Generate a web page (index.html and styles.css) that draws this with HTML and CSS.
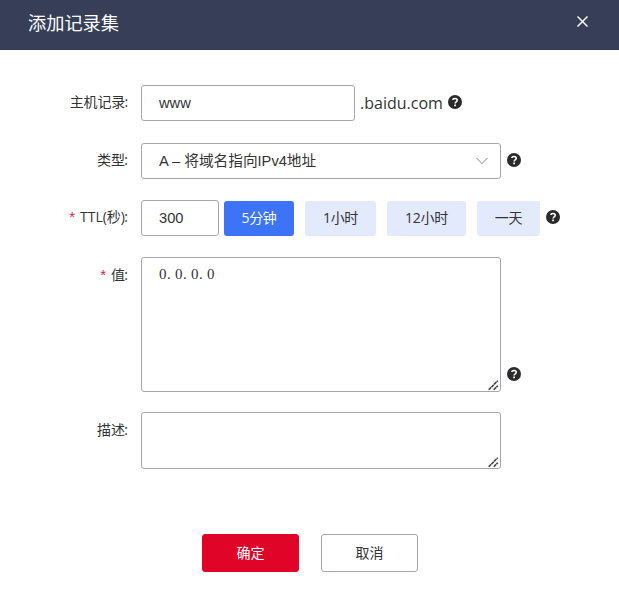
FILE: index.html
```html
<!DOCTYPE html>
<html lang="zh-CN">
<head>
<meta charset="utf-8">
<title>添加记录集</title>
<link rel="stylesheet" href="styles.css">
</head>
<body>
<svg class="defs" width="0" height="0">
  <symbol id="help" viewBox="0 0 14 14">
    <circle cx="7" cy="7" r="7" fill="#2b2b2b"/>
    <path d="M4.8 5C5 3 9.200 3 9.200 5.200C9.200 6.800 7.100 6.800 7.100 8.600" fill="none" stroke="#fff" stroke-width="1.6"/>
    <rect x="6.200" y="9.500" width="1.8" height="1.7" fill="#fff"/>
  </symbol>
  <symbol id="grip" viewBox="0 0 11 11">
    <path d="M.7 9.8L9.8.7M5.7 9.8L9.8 5.7" fill="none" stroke="#444" stroke-width="1.6" stroke-dasharray="3.4 .4"/>
  </symbol>
</svg>
<header class="header">
  <h1 class="title">添加记录集</h1>
  <svg class="close" viewBox="0 0 11 11"><path d="M.5.5l10 10M10.5.5l-10 10" stroke="#fff" stroke-width="1.5"/></svg>
</header>
<main class="form">
  <div class="row host">
    <div class="label">主机记录<span class="colon">:</span></div>
    <div class="box host-box">www</div>
    <span class="domain">.baidu.com</span>
    <svg class="help"><use href="#help"/></svg>
  </div>
  <div class="row type">
    <div class="label">类型<span class="colon">:</span></div>
    <div class="box select"><span>A – 将域名指向IPv4地址</span>
      <svg class="chevron" viewBox="0 0 12 8"><path d="M.5.8L6 6.8L11.500.8" fill="none" stroke="#aaa" stroke-width="1.1"/></svg>
    </div>
    <svg class="help"><use href="#help"/></svg>
  </div>
  <div class="row ttl">
    <div class="label"><span class="star">*</span>TTL(秒)<span class="colon">:</span></div>
    <div class="box ttl-box">300</div>
    <div class="chips">
      <div class="chip active">5分钟</div>
      <div class="chip">1小时</div>
      <div class="chip wide">12小时</div>
      <div class="chip day">一天</div>
    </div>
    <svg class="help"><use href="#help"/></svg>
  </div>
  <div class="row value">
    <div class="label"><span class="star">*</span>值<span class="colon">:</span></div>
    <div class="box area value-area"><span class="ip">0<i>.</i>0<i>.</i>0<i>.</i>0</span><svg class="grip"><use href="#grip"/></svg></div>
    <svg class="help"><use href="#help"/></svg>
  </div>
  <div class="row desc">
    <div class="label">描述<span class="colon">:</span></div>
    <div class="box area desc-area"><svg class="grip"><use href="#grip"/></svg></div>
  </div>
</main>
<footer class="actions">
  <div class="btn primary">确定</div>
  <div class="btn">取消</div>
</footer>
</body>
</html>
```
FILE: styles.css
```css
* { box-sizing: border-box; }
body {
  margin: 0;
  background: #fff;
  color: #333;
  font: 14px/20px "Open Sans", "Noto Sans CJK SC", sans-serif;
  white-space: nowrap;
}
svg { display: block; flex: none; }
.defs { position: absolute; }
.header {
  display: flex;
  align-items: center;
  justify-content: space-between;
  height: 50px;
  padding: 0 31px 6px 28px;
  background: #373f58;
}
.title { margin: 1px 0 0; color: #fff; font-size: 18.2px; font-weight: 400; line-height: 26px; }
.close { width: 11px; height: 11px; margin-top: -1px; }
.form { padding-top: 35px; }
.row { display: flex; align-items: center; }
.label { width: 128px; margin-right: 13px; flex: none; text-align: right; }
.colon { display: inline-block; width: 3px; text-indent: -1px; }
.host .label { letter-spacing: -.2px; }
.star { margin-right: 5px; color: #e0223c; font-family: "Liberation Sans", sans-serif; font-size: 15px; }
.box {
  display: flex;
  align-items: center;
  flex: none;
  height: 36px;
  padding-left: 17px;
  border: 1px solid #a3a6b1;
  border-radius: 3px;
  font: 14.67px/20px "Liberation Sans", "Noto Sans CJK SC", sans-serif;
}
.help { width: 14px; height: 14px; margin-left: 6px; }
.host .label, .type .label, .ttl .label { padding-bottom: 2px; }
.host-box { width: 214px; }
.domain { width: 83px; margin-left: 5px; font-size: 16px; line-height: 24px; }
.host .help { margin-left: 5px; margin-bottom: 2px; }
.type { margin-top: 22px; }
.type .help, .ttl .help { margin-bottom: 2px; }
.select { width: 360px; justify-content: space-between; padding-right: 12px; }
.chevron { width: 12px; height: 8px; }
.ttl { margin-top: 21px; }
.ttl-box { width: 78px; }
.chips { display: flex; gap: 11px; margin: 1px 0 0 5px; }
.chip {
  width: 71px;
  height: 35px;
  border-radius: 3px;
  background: #e3eafc;
  line-height: 34px;
  text-align: center;
}
.chip { letter-spacing: -.3px; }
.active { width: 70px; background: #3d74f7; color: #fff; }
.wide { width: 79px; }
.day { width: 63px; }
.value { align-items: flex-start; margin-top: 21px; }
.value .label, .desc .label { padding-top: 8px; }
.area { position: relative; width: 360px; align-items: flex-start; padding-top: 6px; }
.value-area { height: 135px; }
.ip { font: 15px/20px "Liberation Serif", serif; letter-spacing: .5px; }
.ip i { font-style: normal; letter-spacing: 4.25px; }
.grip { position: absolute; right: 1px; bottom: 0; width: 11px; height: 11px; }
.value .help { align-self: flex-end; margin-bottom: 11px; }
.desc { align-items: flex-start; margin-top: 20px; }
.desc-area { height: 57px; }
.actions { display: flex; justify-content: center; gap: 22px; margin-top: 65px; padding-left: 1px; }
.btn {
  width: 97px;
  height: 38px;
  border: 1px solid #a3a6b1;
  border-radius: 3px;
  line-height: 36px;
  text-align: center;
}
.primary { border-color: #e00428; background: #e00428; color: #fff; }
```
